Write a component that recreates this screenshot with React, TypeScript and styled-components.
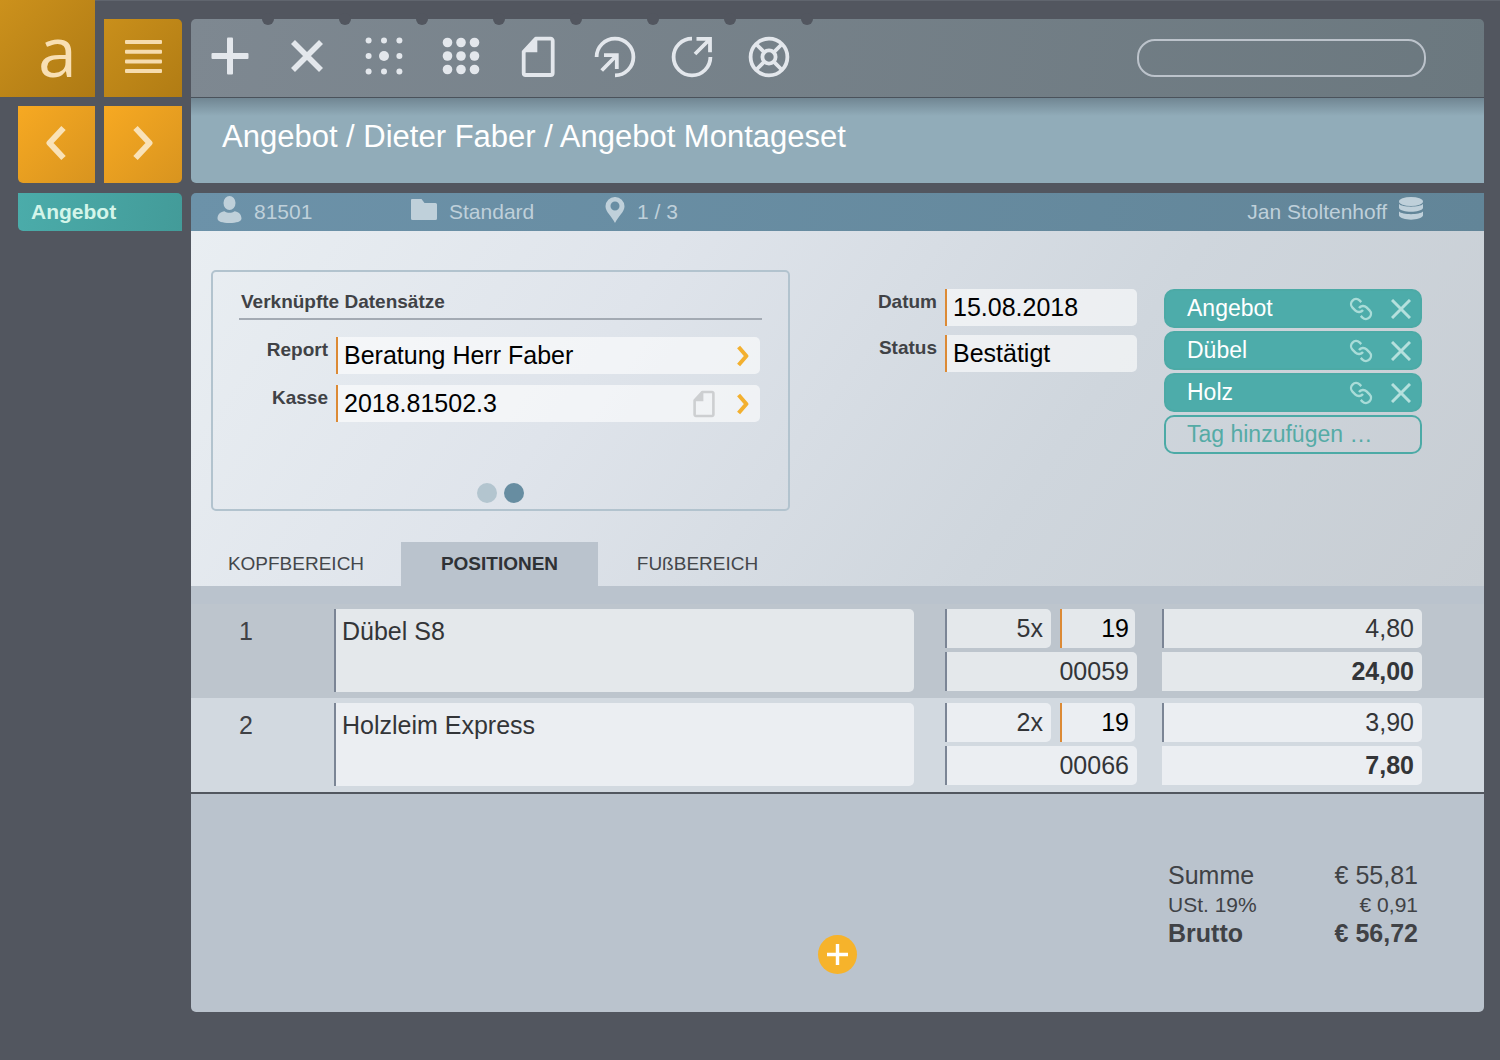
import React from "react";
import styled, { createGlobalStyle, css } from "styled-components";

const sans = '"Liberation Sans", Arial, Helvetica, sans-serif';

const GlobalStyle = createGlobalStyle`
  * { box-sizing: border-box; }
  body { margin: 0; background: #52565f; font-family: ${sans}; color: #3f4145; }
  button, input, textarea { font-family: inherit; margin: 0; border: 0; border-radius: 0; outline: none; }
  button { padding: 0; background: none; cursor: pointer; color: inherit; }
  svg { display: block; flex: none; }
`;

const Page = styled.div`
  display: grid;
  grid-template-columns: 182px minmax(0, 1fr);
  column-gap: 9px;
  padding: 0 16px 48px 0;
  min-height: 100vh;
  align-items: start;
  background: #52565f;
  box-shadow: inset 0 1px 0 #60656e;
`;

/* ---------- sidebar ---------- */

const Sidebar = styled.aside`
  display: grid;
  grid-template-columns: 95px 78px;
  column-gap: 9px;
`;

const Logo = styled.a`
  height: 97px;
  padding: 2px 0 0 20px;
  display: flex;
  align-items: center;
  justify-content: center;
  background: linear-gradient(135deg, #cc911c, #ae7a14);
  color: #f8dfb4;
  font: 70px/80px "Open Sans", "Noto Sans", sans-serif;
  text-decoration: none;
`;

const MenuButton = styled.button`
  height: 78px;
  margin-top: 19px;
  padding-bottom: 3px;
  display: grid;
  place-items: center;
  border-radius: 0 5px 0 0;
  background: linear-gradient(135deg, #c98f1b, #b17c14);
  color: #f6dcae;
`;

const NavButton = styled.button<{ $side: "left" | "right" }>`
  height: 77px;
  margin-top: 9px;
  margin-left: ${(p) => (p.$side === "left" ? "18px" : "0")};
  padding-bottom: 3px;
  display: grid;
  place-items: center;
  border-radius: ${(p) => (p.$side === "left" ? "0 0 0 5px" : "0 0 5px 0")};
  background: linear-gradient(135deg, #f7a922, #d8941f);
  color: #f9e2b8;
`;

const SideLink = styled.a`
  grid-column: 1 / -1;
  margin: 10px 0 0 18px;
  padding-left: 13px;
  border-radius: 0 5px 0 5px;
  background: linear-gradient(100deg, #4bacaa, #439b99);
  color: #d4f5ea;
  font-size: 21px;
  font-weight: bold;
  line-height: 38px;
  text-decoration: none;
`;

/* ---------- header ---------- */

const Main = styled.main`
  padding-top: 19px;
  min-width: 0;
`;

const Toolbar = styled.header`
  display: flex;
  align-items: center;
  height: 78px;
  padding-right: 58px;
  border-radius: 5px 5px 0 0;
  background: linear-gradient(100deg, #7e8891, #6b787f);
  color: #e3e7ec;
`;

const ToolButton = styled.button`
  position: relative;
  width: 77px;
  height: 78px;
  padding-bottom: 2px;
  display: grid;
  place-items: center;

  &::after {
    content: "";
    position: absolute;
    top: -6px;
    right: -6px;
    width: 12px;
    height: 12px;
    border-radius: 50%;
    background: #52565f;
  }
`;

const Search = styled.input`
  && {
    width: 289px;
    height: 38px;
    margin-left: auto;
    padding: 0 18px;
    border: 2px solid #bcc3cb;
    border-radius: 18px;
  }
  background: transparent;
  color: #fff;
  font-size: 21px;
`;

const TitleBar = styled.div`
  height: 86px;
  padding: 0 31px;
  border-top: 1px solid #4a525b;
  border-radius: 0 0 0 5px;
  background:
    linear-gradient(rgba(80, 96, 108, 0.5), rgba(80, 96, 108, 0) 18px),
    #91acb9;
`;

const Title = styled.h1`
  margin: 0;
  color: #fff;
  font-size: 31px;
  font-weight: normal;
  line-height: 78px;
  white-space: nowrap;
`;

const InfoBar = styled.div`
  display: flex;
  height: 38px;
  margin-top: 10px;
  padding: 0 61px 0 26px;
  border-radius: 5px 0 0 0;
  background: linear-gradient(100deg, #6c92a9, #628598);
  color: #bfd0da;
  font-size: 21px;
  line-height: 38px;
`;

const InfoItem = styled.span`
  display: flex;
  gap: 12px;
  width: 194px;
  white-space: nowrap;

  &:last-child { width: auto; margin-left: auto; }
  svg { margin-top: 3px; }
`;

/* ---------- form ---------- */

const Form = styled.section`
  padding-top: 39px;
  background: linear-gradient(125deg, #e9eef2, #dfe4eb 32%, #cfd6dd 66%, #c7cdd3);
`;

const FormRow = styled.div`
  display: flex;
  align-items: flex-start;
  padding: 0 62px 0 20px;
`;

const Panel = styled.section`
  flex: 1;
  min-width: 0;
  height: 241px;
  padding: 17px 26px 6px;
  display: flex;
  flex-direction: column;
  border: 2px solid #b2c3ce;
  border-radius: 5px;
`;

const PanelTitle = styled.h2`
  margin: 0 0 17px;
  padding: 0 2px 3px;
  border-bottom: 2px solid #a3aab3;
  color: #404246;
  font-size: 19px;
  line-height: 26px;
`;

const FieldList = styled.div<{ $labelWidth: number; $gap: number }>`
  display: grid;
  grid-template-columns: ${(p) => p.$labelWidth}px minmax(0, 1fr);
  column-gap: 8px;
  row-gap: ${(p) => p.$gap}px;
`;

const PanelFields = styled(FieldList)`
  padding-right: 2px;
`;

const DateFields = styled(FieldList)`
  width: 267px;
  margin: 19px 27px 0 80px;
`;

const Label = styled.label`
  color: #404246;
  font-size: 19px;
  font-weight: bold;
  line-height: 26px;
  text-align: right;
`;

const FieldBox = styled.div`
  display: flex;
  align-items: center;
  gap: 21px;
  height: 37px;
  padding-right: 11px;
  border-left: 2px solid #dc8a35;
  border-radius: 0 5px 5px 0;
  background: rgba(255, 255, 255, 0.6);
`;

const FieldInput = styled.input`
  flex: 1;
  min-width: 0;
  height: 37px;
  padding: 0 0 0 6px;
  background: transparent;
  color: #000;
  font-size: 25px;
`;

const IconButton = styled.button<{ $color: string }>`
  flex: none;
  color: ${(p) => p.$color};
`;

const Dots = styled.div`
  display: flex;
  justify-content: center;
  gap: 7px;
  margin-top: auto;
`;

const Dot = styled.button<{ $active?: boolean }>`
  && { border-radius: 50%; }
  width: 20px;
  height: 20px;
  background: ${(p) => (p.$active ? "#678da1" : "#b3c5cf")};
`;

const Tags = styled.div`
  display: flex;
  flex-direction: column;
  gap: 3px;
  width: 258px;
  margin-top: 19px;
`;

const tagShape = css`
  height: 39px;
  border: 2px solid #4caaa6;
  border-radius: 10px;
  font-size: 23px;
`;

const Tag = styled.div`
  ${tagShape}
  display: flex;
  align-items: center;
  gap: 18px;
  padding: 0 9px 0 21px;
  background: #4dacaa;
  color: #fff;
`;

const TagName = styled.span`
  flex: 1;
`;

const TagInput = styled.input`
  && {
    ${tagShape}
    width: 100%;
    padding: 0 21px;
  }
  background: transparent;
  &::placeholder { color: #55aba6; opacity: 1; }
`;

const Tabs = styled.div`
  display: grid;
  grid-template-columns: 210px 197px 199px;
  margin-top: 31px;
`;

const Tab = styled.button<{ $active?: boolean }>`
  height: 44px;
  background: ${(p) => (p.$active ? "#bac3cd" : "transparent")};
  color: ${(p) => (p.$active ? "#2f3236" : "#44474b")};
  font-size: 19px;
  font-weight: ${(p) => (p.$active ? "bold" : "normal")};
`;

/* ---------- positions ---------- */

const Lines = styled.div`
  padding-top: 18px;
  background: #bac3cd;
  border-bottom: 2px solid #52575f;
`;

const LineTable = styled.table`
  width: 100%;
  table-layout: fixed;
  border-collapse: collapse;

  td { vertical-align: top; padding: 5px 0 6px; }
`;

const LineRow = styled.tr<{ $alt?: boolean }>`
  background: ${(p) => (p.$alt ? "#d2d9e0" : "#bdc5cd")};
  --field: ${(p) => (p.$alt ? "#ebeef2" : "#e4e8eb")};
`;

const NumberCell = styled.td`
  width: 143px;
`;

const RowNumber = styled.span`
  display: block;
  width: 110px;
  padding-top: 8px;
  font-size: 25px;
  line-height: 28px;
  text-align: center;
`;

const Description = styled.textarea`
  display: block;
  width: 100%;
  height: 83px;
  padding: 8px 6px;
  resize: none;
  && {
    border-left: 2px solid #7b8595;
    border-radius: 0 5px 5px 0;
  }
  background: var(--field);
  color: #333538;
  font-size: 25px;
  line-height: 28px;
`;

const QuantityCell = styled.td`
  width: 248px;
`;

const PriceCell = styled.td`
  width: 322px;
`;

const CellStack = styled.div<{ $inset: string }>`
  display: flex;
  flex-direction: column;
  gap: 4px;
  padding: ${(p) => p.$inset};
`;

const CellPair = styled.div`
  display: grid;
  grid-template-columns: 106px 75px;
  gap: 9px;
`;

const CellInput = styled.input<{ $edge?: string; $strong?: boolean; $editable?: boolean }>`
  width: 100%;
  min-width: 0;
  height: 39px;
  padding: 0 ${(p) => (p.$editable ? "6px" : "8px")} 0 4px;
  && {
    border-left: ${(p) => (p.$edge ? `2px solid ${p.$edge}` : "0")};
    border-radius: 0 5px 5px 0;
  }
  background: var(--field);
  color: ${(p) => (p.$editable ? "#000" : "#333538")};
  font-size: 25px;
  font-weight: ${(p) => (p.$strong ? "bold" : "normal")};
  text-align: right;
`;

const Footer = styled.footer`
  display: grid;
  grid-template-columns: 1fr auto 1fr;
  align-items: start;
  padding: 66px 66px 38px;
  border-radius: 0 0 5px 5px;
  background: #bac3cd;
`;

const AddButton = styled.button`
  && { border-radius: 50%; }
  grid-column: 2;
  width: 39px;
  height: 39px;
  margin-top: 75px;
  display: grid;
  place-items: center;
  background: #f6b32b;
  color: #fff;
`;

const Totals = styled.table`
  justify-self: end;
  width: 250px;
  border-collapse: collapse;
  color: #404246;

  th { padding: 0; text-align: left; font-weight: inherit; }
  td { padding: 0; text-align: right; }
`;

const TotalRow = styled.tr<{ $small?: boolean; $strong?: boolean }>`
  font-size: ${(p) => (p.$small ? "21px" : "25px")};
  font-weight: ${(p) => (p.$strong ? "bold" : "normal")};
  line-height: ${(p) => (p.$strong ? "26px" : "30px")};
`;

/* ---------- icons ---------- */

const ToolIcon = ({ children }: { children: React.ReactNode }) => (
  <svg width="42" height="42" viewBox="0 0 42 42" fill="none" stroke="currentColor" strokeWidth="3.8" aria-hidden="true">
    {children}
  </svg>
);

const DotMatrix = ({ step, radius, middle }: { step: number; radius: number; middle: number }) => (
  <ToolIcon>
    <g fill="currentColor" stroke="none">
      {[-1, 0, 1].map((row) =>
        [-1, 0, 1].map((col) => (
          <circle
            key={`${row}${col}`}
            cx={21 + col * step}
            cy={20 + row * step}
            r={row === 0 && col === 0 ? middle : radius}
          />
        ))
      )}
    </g>
  </ToolIcon>
);

const tools: { label: string; icon: React.ReactNode }[] = [
  {
    label: "Neu",
    icon: (
      <ToolIcon>
        <g fill="currentColor" stroke="none">
          <rect x="2.5" y="17" width="37" height="6" rx="1" />
          <rect x="18" y="1.5" width="6" height="37" rx="1" />
        </g>
      </ToolIcon>
    ),
  },
  {
    label: "Löschen",
    icon: (
      <ToolIcon>
        <path d="M7 6L35 34M35 6L7 34" strokeWidth="5.6" />
      </ToolIcon>
    ),
  },
  { label: "Auswahl", icon: <DotMatrix step={15.4} radius={3} middle={5} /> },
  { label: "Übersicht", icon: <DotMatrix step={13.5} radius={4.8} middle={4.8} /> },
  {
    label: "Dokument",
    icon: (
      <ToolIcon>
        <path d="M6.7 15.7L18.7 2.7H33.7a2 2 0 0 1 2 2V37a2 2 0 0 1-2 2H8.7a2 2 0 0 1-2-2z" strokeLinejoin="round" />
        <path d="M6 16.3H20.3V2.7z" fill="currentColor" stroke="none" />
      </ToolIcon>
    ),
  },
  {
    label: "Import",
    icon: (
      <ToolIcon>
        <path d="M2.6 21A18.4 18.4 0 1 1 21 39.4M10 19.2H22.8V33M22 20L7.7 34.5" />
      </ToolIcon>
    ),
  },
  {
    label: "Export",
    icon: (
      <ToolIcon>
        <path d="M21 2.6A18.4 18.4 0 1 0 39.4 21M25.5 2.8H39V16.3M38 4L24 18" />
      </ToolIcon>
    ),
  },
  {
    label: "Hilfe",
    icon: (
      <ToolIcon>
        <circle cx="21" cy="21" r="18.4" />
        <circle cx="21" cy="21" r="6.6" />
        <path d="M8 8L16.3 16.3M34 8L25.7 16.3M8 34L16.3 25.7M34 34L25.7 25.7" />
      </ToolIcon>
    ),
  },
];

const Chevron = ({ flip }: { flip?: boolean }) => (
  <svg width="24" height="36" viewBox="0 0 24 36" fill="none" stroke="currentColor" strokeWidth="6" aria-hidden="true">
    <path d={flip ? "M4.5 3L18.5 18L4.5 33" : "M18.5 3L4.5 18L18.5 33"} strokeLinejoin="round" />
  </svg>
);

const SmallChevron = () => (
  <svg width="12" height="22" viewBox="0 0 12 22" fill="none" stroke="currentColor" strokeWidth="4" aria-hidden="true">
    <path d="M1.6 2L9.4 11L1.6 20" strokeLinejoin="round" />
  </svg>
);

const SmallDocument = () => (
  <svg width="24" height="28" viewBox="0 0 24 28" fill="none" stroke="currentColor" strokeWidth="2.6" aria-hidden="true">
    <path d="M2.6 10.4L10.4 2H20a1.4 1.4 0 0 1 1.4 1.4V24.6A1.4 1.4 0 0 1 20 26H4a1.4 1.4 0 0 1-1.4-1.4z" strokeLinejoin="round" />
    <path d="M2 11.2H11.4V2z" fill="currentColor" stroke="none" />
  </svg>
);

const LinkIcon = () => (
  <svg width="24" height="24" viewBox="0 0 24 24" fill="none" stroke="currentColor" strokeWidth="2.4" aria-hidden="true">
    <g transform="matrix(-1 0 0 1 24 0)">
      <path d="M10 13a5 5 0 0 0 7.54.54l3-3a5 5 0 0 0-7.07-7.07l-1.72 1.71" />
      <path d="M14 11a5 5 0 0 0-7.54-.54l-3 3a5 5 0 0 0 7.07 7.07l1.71-1.71" />
    </g>
  </svg>
);

const CrossIcon = () => (
  <svg width="20" height="20" viewBox="0 0 20 20" stroke="currentColor" strokeWidth="3" aria-hidden="true">
    <path d="M1 1L19 19M19 1L1 19" />
  </svg>
);

const UserIcon = () => (
  <svg width="25" height="27" viewBox="0 0 24 27" fill="currentColor" aria-hidden="true">
    <ellipse cx="12" cy="7" rx="6" ry="7" />
    <path d="M0 22.5C0 18 3.5 15.6 7 15.2C10 17.2 14 17.2 17 15.2C20.5 15.6 24 18 24 22.5C24 25.5 19 27 12 27S0 25.5 0 22.5z" />
  </svg>
);

const FolderIcon = () => (
  <svg width="26" height="27" viewBox="0 0 26 27" fill="currentColor" aria-hidden="true">
    <path d="M1 3H10.5L13.5 7H24.5Q26 7 26 8.5V22.5Q26 24 24.5 24H1.5Q0 24 0 22.5V4Q0 3 1 3z" />
  </svg>
);

const PinIcon = () => (
  <svg width="20" height="27" viewBox="0 0 19 27" fill="currentColor" fillRule="evenodd" aria-hidden="true">
    <path d="M9.5 1A9.3 9.3 0 0 1 19 10.3C19 16 13 20 9.5 27C6 20 0 16 0 10.3A9.3 9.3 0 0 1 9.5 1zM9.5 5.5a4.5 4.5 0 1 0 0 9a4.5 4.5 0 1 0 0-9z" />
  </svg>
);

const DatabaseIcon = () => (
  <svg width="24" height="24" viewBox="0 0 24 24" fill="currentColor" aria-hidden="true">
    <ellipse cx="12" cy="5.5" rx="12" ry="4.5" />
    <path d="M0 8C3 11.5 21 11.5 24 8V12C22 17 2 17 0 12z" />
    <path d="M0 15.5C3 19 21 19 24 15.5V19.5C22 25 2 25 0 19.5z" />
  </svg>
);

/* ---------- data ---------- */

const tags = ["Angebot", "Dübel", "Holz"];

const positions = [
  { text: "Dübel S8", quantity: "5x", tax: "19", article: "00059", price: "4,80", total: "24,00" },
  { text: "Holzleim Express", quantity: "2x", tax: "19", article: "00066", price: "3,90", total: "7,80" },
];

const edge = "#7b8595";

export default function App() {
  return (
    <>
      <GlobalStyle />
      <Page>
        <Sidebar>
          <Logo href="#">a</Logo>
          <MenuButton aria-label="Menü">
            <svg width="37" height="34" viewBox="0 0 37 34" fill="currentColor" aria-hidden="true">
              {[0, 9.7, 19.4, 29].map((y) => (
                <rect key={y} y={y} width="37" height="4" rx="1" />
              ))}
            </svg>
          </MenuButton>
          <NavButton $side="left" aria-label="Zurück">
            <Chevron />
          </NavButton>
          <NavButton $side="right" aria-label="Vor">
            <Chevron flip />
          </NavButton>
          <SideLink href="#">Angebot</SideLink>
        </Sidebar>

        <Main>
          <Toolbar>
            {tools.map((tool) => (
              <ToolButton key={tool.label} aria-label={tool.label}>
                {tool.icon}
              </ToolButton>
            ))}
            <Search type="search" aria-label="Suche" />
          </Toolbar>
          <TitleBar>
            <Title>Angebot / Dieter Faber / Angebot Montageset</Title>
          </TitleBar>

          <InfoBar>
            <InfoItem><UserIcon />81501</InfoItem>
            <InfoItem><FolderIcon />Standard</InfoItem>
            <InfoItem><PinIcon />1 / 3</InfoItem>
            <InfoItem>Jan Stoltenhoff<DatabaseIcon /></InfoItem>
          </InfoBar>

          <Form>
            <FormRow>
              <Panel>
                <PanelTitle>Verknüpfte Datensätze</PanelTitle>
                <PanelFields $labelWidth={89} $gap={11}>
                  <Label htmlFor="report">Report</Label>
                  <FieldBox>
                    <FieldInput id="report" defaultValue="Beratung Herr Faber" />
                    <IconButton $color="#f3b02f" aria-label="Report öffnen"><SmallChevron /></IconButton>
                  </FieldBox>
                  <Label htmlFor="kasse">Kasse</Label>
                  <FieldBox>
                    <FieldInput id="kasse" defaultValue="2018.81502.3" />
                    <IconButton $color="#cdcfd1" aria-label="Beleg anzeigen"><SmallDocument /></IconButton>
                    <IconButton $color="#f3b02f" aria-label="Kasse öffnen"><SmallChevron /></IconButton>
                  </FieldBox>
                </PanelFields>
                <Dots>
                  <Dot aria-label="Seite 1" />
                  <Dot $active aria-label="Seite 2" />
                </Dots>
              </Panel>

              <DateFields $labelWidth={67} $gap={9}>
                <Label htmlFor="datum">Datum</Label>
                <FieldBox><FieldInput id="datum" defaultValue="15.08.2018" /></FieldBox>
                <Label htmlFor="status">Status</Label>
                <FieldBox><FieldInput id="status" defaultValue="Bestätigt" /></FieldBox>
              </DateFields>

              <Tags>
                {tags.map((tag) => (
                  <Tag key={tag}>
                    <TagName>{tag}</TagName>
                    <IconButton $color="#a9dcd8" aria-label={`${tag} verknüpfen`}><LinkIcon /></IconButton>
                    <IconButton $color="#b5e0dd" aria-label={`${tag} entfernen`}><CrossIcon /></IconButton>
                  </Tag>
                ))}
                <TagInput aria-label="Tag hinzufügen" placeholder="Tag hinzufügen …" />
              </Tags>
            </FormRow>

            <Tabs role="tablist">
              <Tab role="tab">KOPFBEREICH</Tab>
              <Tab role="tab" aria-selected $active>POSITIONEN</Tab>
              <Tab role="tab">FUßBEREICH</Tab>
            </Tabs>
          </Form>

          <Lines>
            <LineTable>
              <tbody>
                {positions.map((line, i) => (
                  <LineRow key={line.article} $alt={i % 2 === 1}>
                    <NumberCell><RowNumber>{i + 1}</RowNumber></NumberCell>
                    <td>
                      <Description aria-label="Bezeichnung" defaultValue={line.text} />
                    </td>
                    <QuantityCell>
                      <CellStack $inset="0 25px 0 31px">
                        <CellPair>
                          <CellInput aria-label="Menge" defaultValue={line.quantity} $edge={edge} />
                          <CellInput aria-label="USt." defaultValue={line.tax} $edge="#dc8a35" $editable />
                        </CellPair>
                        <CellInput aria-label="Artikelnummer" defaultValue={line.article} $edge={edge} />
                      </CellStack>
                    </QuantityCell>
                    <PriceCell>
                      <CellStack $inset="0 62px 0 0">
                        <CellInput aria-label="Einzelpreis" defaultValue={line.price} $edge={edge} />
                        <CellInput aria-label="Gesamtpreis" defaultValue={line.total} $strong />
                      </CellStack>
                    </PriceCell>
                  </LineRow>
                ))}
              </tbody>
            </LineTable>
          </Lines>

          <Footer>
            <AddButton aria-label="Position hinzufügen">
              <svg width="21" height="21" viewBox="0 0 22 22" stroke="currentColor" strokeWidth="3.6" aria-hidden="true">
                <path d="M11 0V22M0 11H22" />
              </svg>
            </AddButton>
            <Totals>
              <tbody>
                <TotalRow><th scope="row">Summe</th><td>€ 55,81</td></TotalRow>
                <TotalRow $small><th scope="row">USt. 19%</th><td>€ 0,91</td></TotalRow>
                <TotalRow $strong><th scope="row">Brutto</th><td>€ 56,72</td></TotalRow>
              </tbody>
            </Totals>
          </Footer>
        </Main>
      </Page>
    </>
  );
}
